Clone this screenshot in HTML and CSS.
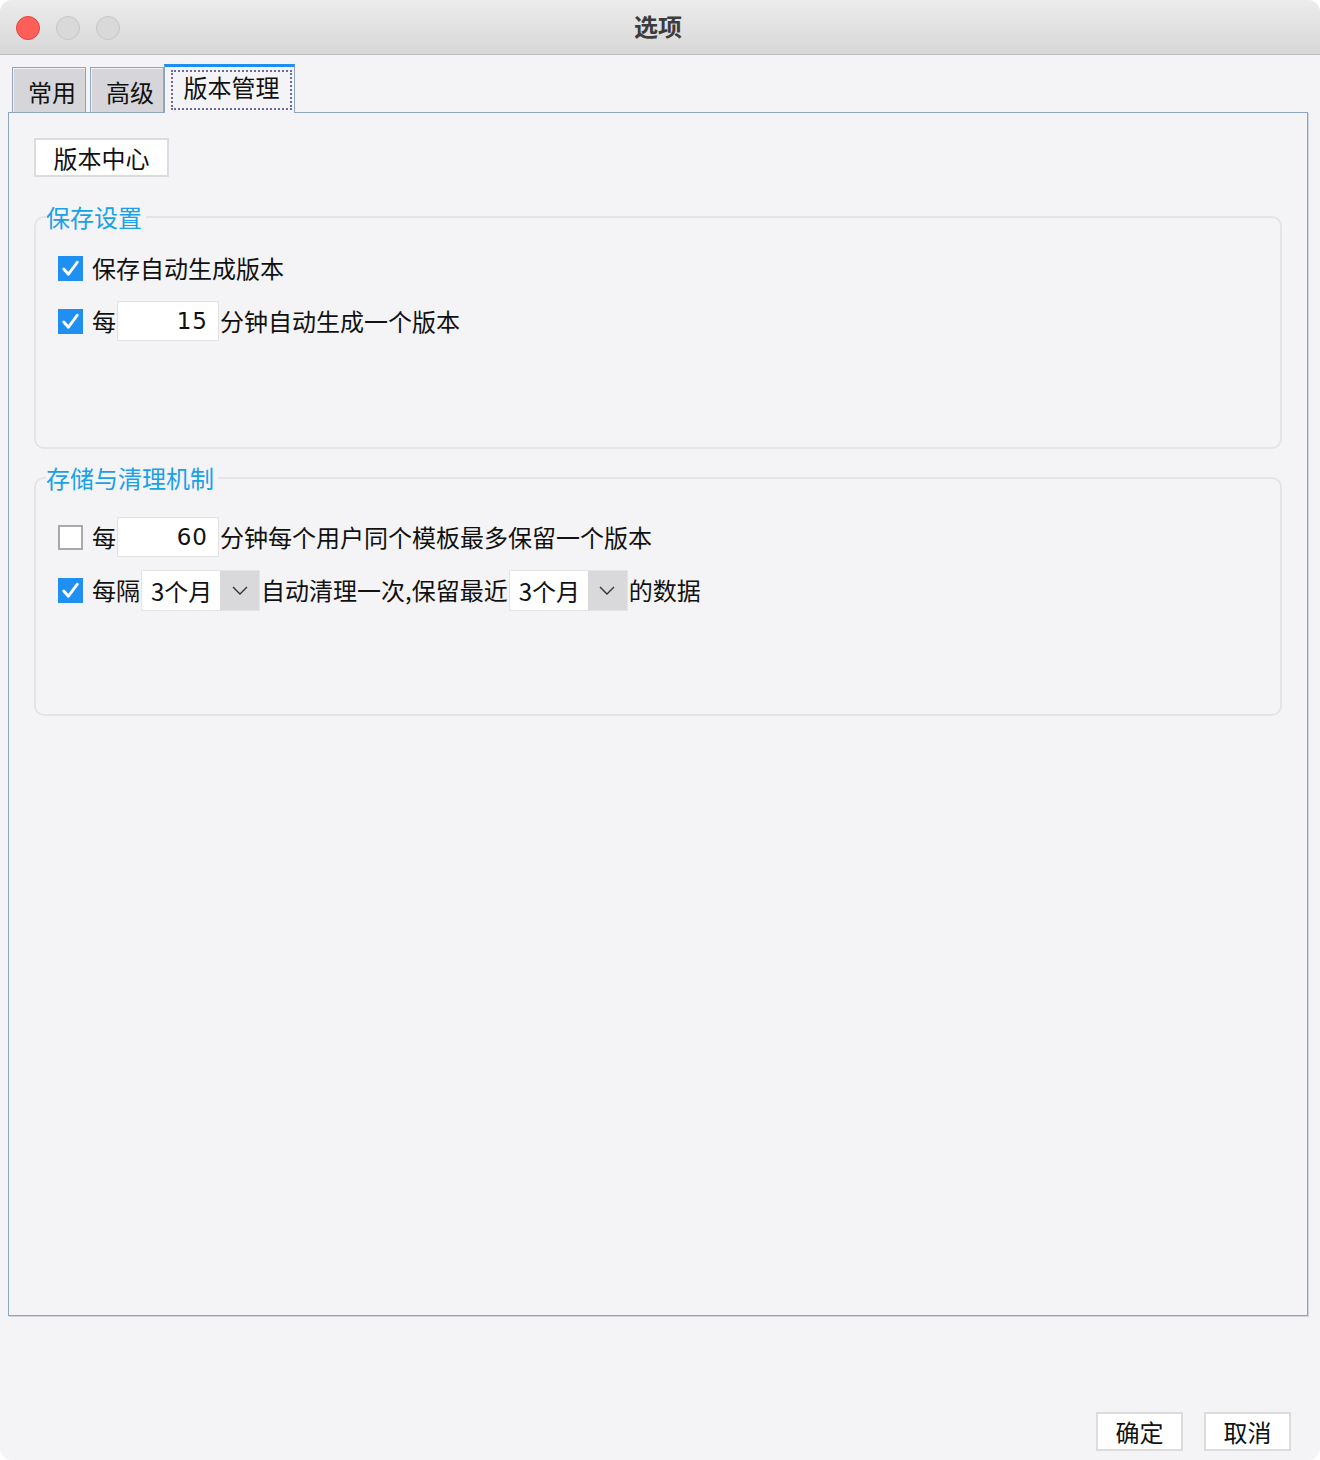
FILE: index.html
```html
<!DOCTYPE html>
<html lang="zh">
<head>
<meta charset="utf-8">
<title>选项</title>
<link rel="stylesheet" href="styles.css">
</head>
<body>
<div class="window">
  <div class="titlebar">
    <div class="lights">
      <span class="light red"></span>
      <span class="light"></span>
      <span class="light"></span>
    </div>
    <div class="title">选项</div>
  </div>
  <div class="content">
    <div class="tabs">
      <div class="tab">常用</div>
      <div class="tab">高级</div>
      <div class="tab active"><span class="focus">版本管理</span></div>
    </div>
    <div class="panel">
      <button class="btn center-btn">版本中心</button>

      <fieldset class="group g1">
        <legend>保存设置</legend>
        <div class="row">
          <span class="cb checked"><svg viewBox="0 0 24 24"><path d="M5.5 12.5 L10 17.5 L18.5 6" fill="none" stroke="#fff" stroke-width="2.8" stroke-linecap="round" stroke-linejoin="round"/></svg></span>
          <span class="lbl">保存自动生成版本</span>
        </div>
        <div class="row">
          <span class="cb checked"><svg viewBox="0 0 24 24"><path d="M5.5 12.5 L10 17.5 L18.5 6" fill="none" stroke="#fff" stroke-width="2.8" stroke-linecap="round" stroke-linejoin="round"/></svg></span>
          <span class="lbl">每</span>
          <span class="field">15</span>
          <span class="lbl">分钟自动生成一个版本</span>
        </div>
      </fieldset>

      <fieldset class="group g2">
        <legend>存储与清理机制</legend>
        <div class="row">
          <span class="cb"></span>
          <span class="lbl">每</span>
          <span class="field">60</span>
          <span class="lbl">分钟每个用户同个模板最多保留一个版本</span>
        </div>
        <div class="row">
          <span class="cb checked"><svg viewBox="0 0 24 24"><path d="M5.5 12.5 L10 17.5 L18.5 6" fill="none" stroke="#fff" stroke-width="2.8" stroke-linecap="round" stroke-linejoin="round"/></svg></span>
          <span class="lbl">每隔</span>
          <span class="combo"><span class="combo-val">3个月</span><span class="combo-arrow"><svg viewBox="0 0 20 20"><path d="M3 7 L10 14 L17 7" fill="none" stroke="#333" stroke-width="1.4"/></svg></span></span>
          <span class="lbl">自动清理一次,保留最近</span>
          <span class="combo"><span class="combo-val">3个月</span><span class="combo-arrow"><svg viewBox="0 0 20 20"><path d="M3 7 L10 14 L17 7" fill="none" stroke="#333" stroke-width="1.4"/></svg></span></span>
          <span class="lbl">的数据</span>
        </div>
      </fieldset>
    </div>
    <div class="footer">
      <button class="btn foot-btn">确定</button>
      <button class="btn foot-btn">取消</button>
    </div>
  </div>
</div>
</body>
</html>
```

FILE: styles.css
```css
* { box-sizing: border-box; }
html, body {
  margin: 0;
  padding: 0;
  background: #ffffff;
}
body {
  font-family: "Noto Sans CJK SC", "Noto Sans", sans-serif;
  font-size: 24px;
  color: #111;
}
.window {
  width: 1320px;
  height: 1460px;
  background: #f4f4f6;
  border-radius: 12px;
  overflow: hidden;
  display: flex;
  flex-direction: column;
}
.titlebar {
  height: 55px;
  flex: none;
  background: linear-gradient(#ececec, #d7d7d7);
  border-bottom: 1px solid #bdbdbd;
  display: flex;
  align-items: center;
  position: relative;
}
.lights {
  display: flex;
  gap: 16px;
  padding-left: 16px;
  padding-top: 2px;
}
.light {
  width: 24px;
  height: 24px;
  border-radius: 50%;
  background: #d9d9d9;
  border: 1px solid #c6c6c6;
}
.light.red {
  background: #fe5f57;
  border-color: #e0443e;
}
.title {
  position: absolute;
  left: 0;
  right: 0;
  top: 10px;
  line-height: 32px;
  text-align: center;
  font-weight: bold;
  font-size: 24px;
  color: #3c3c3c;
  padding-right: 4px;
  pointer-events: none;
}
.content {
  flex: 1;
  display: flex;
  flex-direction: column;
}
.tabs {
  display: flex;
  align-items: flex-end;
  padding-left: 12px;
  margin-top: 8px;
  height: 49px;
}
.tab {
  height: 45px;
  padding: 0 0 3px 6px;
  background: #d6d6da;
  border: 1px solid #8ea4c0;
  border-bottom: none;
  box-shadow: inset 1px 1px 0 #f2f2f4;
  display: flex;
  align-items: flex-end;
  font-size: 24px;
  line-height: 34px;
  width: 74px;
  justify-content: center;
  margin-right: 4px;
}
.tab:nth-child(2) { margin-right: 0; width: 74px; }
.tab.active {
  height: 49px;
  width: 131px;
  background: #f4f4f6;
  border-top: 3px solid #1a90f5;
  margin-bottom: -1px;
  padding: 3px 2px 3px 6px;
  box-shadow: none;
  position: relative;
  z-index: 1;
  align-items: stretch;
  justify-content: stretch;
}
.focus {
  flex: 1;
  border: 2px dotted #6a6aa6;
  display: flex;
  align-items: flex-start;
  justify-content: center;
  line-height: 30px;
  padding-top: 0;
}
.panel {
  margin-left: 8px;
  width: 1300px;
  height: 1204px;
  border: 1px solid #8ea4c0;
  box-shadow: 1px 1px 0 #cfd4dc;
  padding: 25px 25px 0 25px;
  display: flex;
  flex-direction: column;
  align-items: flex-start;
}
.btn {
  font-family: "Noto Sans CJK SC", "Noto Sans", sans-serif;
  font-size: 24px;
  color: #111;
  background: #fff;
  border: 2px solid #dcdcdf;
  padding: 0;
  line-height: 35px;
  height: 39px;
}
.center-btn {
  width: 135px;
}
.group {
  width: 1248px;
  margin: 0;
  border: 2px solid #e4e4e7;
  border-radius: 10px;
  padding: 0 0 0 22px;
}
.group legend {
  color: #1aa0e6;
  font-size: 24px;
  line-height: 28px;
  padding: 0 4px 0 0;
  margin-left: -12px;
}
.g1 {
  margin-top: 26px;
  height: 246px;
  padding-top: 17px;
}
.g2 {
  margin-top: 15px;
  height: 252px;
  padding-top: 25px;
}
.row {
  display: flex;
  align-items: center;
  height: 40px;
  margin-bottom: 13px;
}
.cb {
  width: 25px;
  height: 25px;
  background: #fff;
  border: 2px solid #a9a9ab;
  margin-right: 9px;
  display: inline-flex;
  flex: none;
}
.cb.checked {
  background: #1f8ff2;
  border: none;
}
.cb svg { width: 25px; height: 25px; }
.lbl {
  white-space: nowrap;
  line-height: 30px;
}
.field {
  width: 102px;
  height: 40px;
  background: #fff;
  border: 1px solid #e2e2e4;
  text-align: right;
  padding-right: 10px;
  line-height: 38px;
  letter-spacing: 1px;
  margin: 0 1px 0 1px;
  font-family: "DejaVu Sans", sans-serif;
  font-size: 23px;
}
.combo {
  display: flex;
  height: 41px;
  width: 119px;
  margin: 0 1px 0 1px;
  border: 1px solid #e4e4e6;
  background: #fff;
}
.combo-val {
  flex: 1;
  padding-left: 9px;
  line-height: 39px;
}
.combo-arrow {
  width: 39px;
  background: #d9d9dc;
  display: flex;
  align-items: center;
  justify-content: center;
}
.combo-arrow svg { width: 20px; height: 20px; }
.footer {
  display: flex;
  justify-content: flex-end;
  gap: 21px;
  padding-right: 29px;
  margin-top: auto;
  margin-bottom: 9px;
}
.foot-btn {
  width: 87px;
}
```
